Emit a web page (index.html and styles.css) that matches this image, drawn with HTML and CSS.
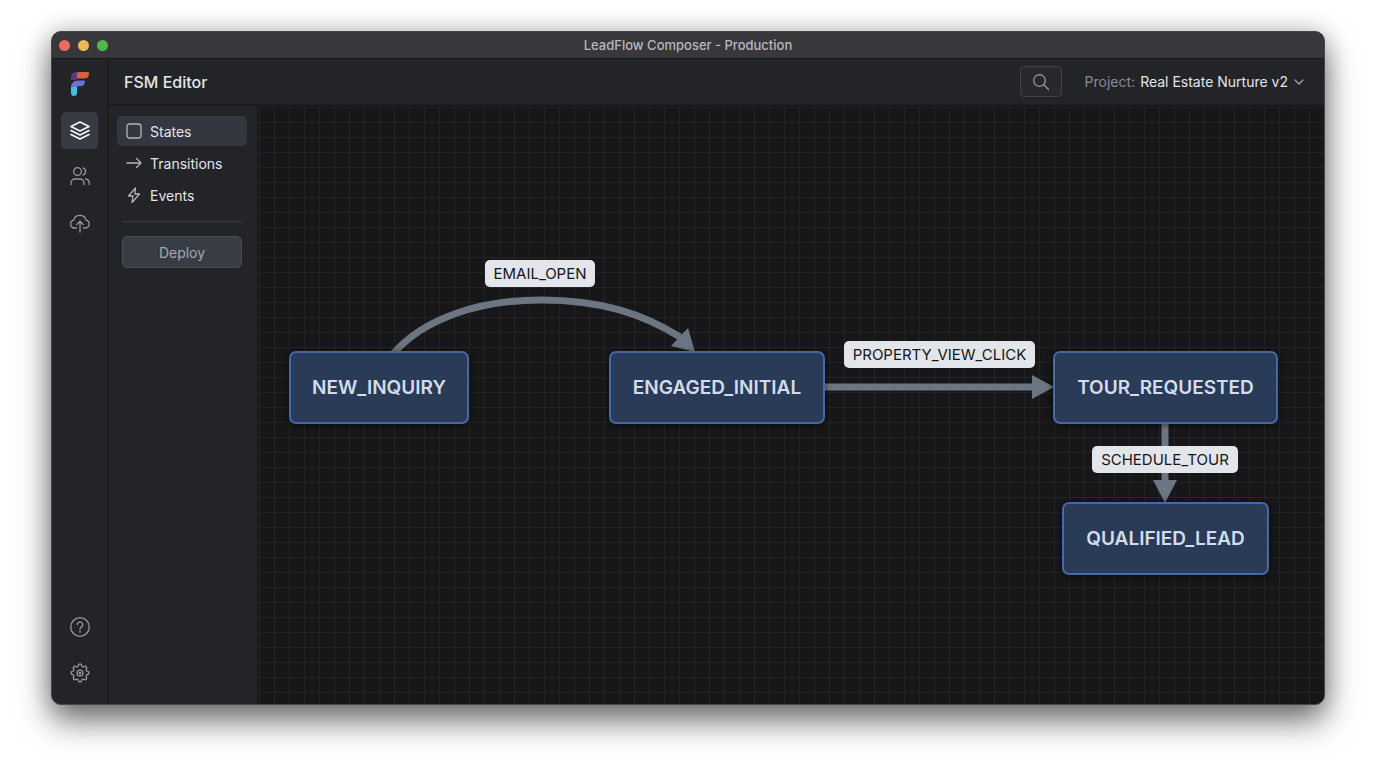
FILE: index.html
```html
<!DOCTYPE html>
<html lang="en">
<head>
  <meta charset="UTF-8">
  <meta name="viewport" content="width=device-width, initial-scale=1.0">
  <title>LeadFlow Composer - Production</title>
  <link rel="stylesheet" href="styles.css">
</head>
<body>
  <div class="window">
    <header class="titlebar">
      <div class="lights">
        <button class="light red" aria-label="Close"></button>
        <button class="light yellow" aria-label="Minimize"></button>
        <button class="light green" aria-label="Zoom"></button>
      </div>
      <div class="window-title">LeadFlow Composer - Production</div>
    </header>

    <div class="app">
      <nav class="rail" aria-label="Main">
        <svg class="logo" width="20" height="26" viewBox="0 0 20 26">
          <path d="M8 1H6a5 5 0 0 0-5 5v3h5l2-3z" fill="#5c3a78"/>
          <path d="M9 1h9a1 1 0 0 1 1 1v1a4.500 4.500 0 0 1-4.500 4.500H7V3a2 2 0 0 1 2-2z" fill="#d9603f"/>
          <path d="M1 16a6.500 6.500 0 0 1 6.500-6.500H14a1 1 0 0 1 1 1A4.800 4.800 0 0 1 10.200 15.300H7L1 17z" fill="#6a6fe0"/>
          <path d="M1 16.500l6-1.200V22a3 3 0 0 1-6 0z" fill="#3fc1e0"/>
        </svg>
        <button class="rail-btn active" aria-label="Layers">
          <svg width="22" height="22" viewBox="0 0 22 22">
            <path d="M11 2l9 4.500-9 4.500-9-4.500z"/>
            <path d="M2 10.500l9 4.500 9-4.500"/>
            <path d="M2 14.500l9 4.500 9-4.500"/>
          </svg>
        </button>
        <button class="rail-btn" aria-label="Contacts">
          <svg width="22" height="22" viewBox="0 0 22 22">
            <circle cx="8.500" cy="5.500" r="3.800"/>
            <path d="M2 18.500v-1.500a4 4 0 0 1 4-4h5a4 4 0 0 1 4 4v1.500"/>
            <path d="M14 1.900a3.800 3.800 0 0 1 0 7.200"/>
            <path d="M16.500 13a4 4 0 0 1 3.700 4v1.500"/>
          </svg>
        </button>
        <button class="rail-btn" aria-label="Upload">
          <svg width="22" height="22" viewBox="0 0 22 22">
            <path d="M7.500 16H5.500a4 4 0 0 1-.8-7.900 6.400 6.400 0 0 1 12.300 0A4 4 0 0 1 16.500 16h-2"/>
            <path d="M11 20V9.500M7.800 12.500L11 9.300l3.200 3.200"/>
          </svg>
        </button>
        <button class="rail-btn push" aria-label="Help">
          <svg width="22" height="22" viewBox="0 0 22 22">
            <circle cx="11" cy="11" r="9.300"/>
            <path d="M8.300 8.600a2.700 2.700 0 1 1 4.200 2.300c-1 .7-1.500 1.200-1.500 2.300"/>
            <path d="M11 15.200v1"/>
          </svg>
        </button>
        <button class="rail-btn" aria-label="Settings">
          <svg width="22" height="22" viewBox="0 0 22 22">
            <circle cx="11" cy="11" r="2.900"/>
            <circle cx="11" cy="11" r=".6"/>
            <path d="M9.300 3.700A1.700 1.700 0 0 1 12.700 3.700A1.400 1.400 0 0 0 14.970 4.640A1.700 1.700 0 0 1 17.360 7.030A1.400 1.400 0 0 0 18.300 9.300A1.700 1.700 0 0 1 18.300 12.700A1.400 1.400 0 0 0 17.360 14.970A1.700 1.700 0 0 1 14.970 17.360A1.400 1.400 0 0 0 12.700 18.300A1.700 1.700 0 0 1 9.300 18.300A1.400 1.400 0 0 0 7.030 17.360A1.700 1.700 0 0 1 4.640 14.970A1.400 1.400 0 0 0 3.700 12.700A1.700 1.700 0 0 1 3.700 9.300A1.400 1.400 0 0 0 4.640 7.030A1.700 1.700 0 0 1 7.030 4.640A1.400 1.400 0 0 0 9.300 3.700z"/>
          </svg>
        </button>
      </nav>

      <div class="main">
        <div class="toolbar">
          <h1>FSM Editor</h1>
          <button class="search" aria-label="Search">
            <svg width="18" height="18" viewBox="0 0 18 18">
              <circle cx="7.500" cy="7.500" r="5.800"/>
              <path d="M11.800 11.800L16.500 16.500"/>
            </svg>
          </button>
          <div class="project">
            <label for="project">Project:</label>
            <select id="project">
              <option>Real Estate Nurture v2</option>
            </select>
            <svg width="10" height="8" viewBox="0 0 10 8"><path d="M1 2l4 4 4-4"/></svg>
          </div>
        </div>

        <div class="workspace">
          <aside class="sidebar">
            <button class="side-item active">
              <svg width="16" height="16" viewBox="0 0 16 16"><rect x="1" y="1" width="14" height="14" rx="2.500"/></svg>
              States
            </button>
            <button class="side-item">
              <svg width="16" height="16" viewBox="0 0 16 16"><path d="M1 8h14M10.500 3.500L15 8l-4.500 4.500"/></svg>
              Transitions
            </button>
            <button class="side-item">
              <svg width="16" height="16" viewBox="0 0 16 16"><path d="M9.500 1L2.500 9h4.500l-1 6.500L13.500 7H9z"/></svg>
              Events
            </button>
            <hr>
            <button class="deploy">Deploy</button>
          </aside>

          <main class="canvas">
            <svg class="edges" width="100%" height="100%">
              <path class="line" d="M135 248C166 212 222 194 283 194S385 208 422 231"/>
              <path class="head" d="M437 246l-7-24-17 18z"/>
              <path class="line" d="M566 281H776"/>
              <path class="head" d="M796 281l-22-12v24z"/>
              <path class="line" d="M907 317V376"/>
              <path class="head" d="M907 397l-12-23h24z"/>
            </svg>
            <div class="node new-inquiry">NEW_INQUIRY</div>
            <div class="node engaged">ENGAGED_INITIAL</div>
            <div class="node tour">TOUR_REQUESTED</div>
            <div class="node qualified">QUALIFIED_LEAD</div>
            <div class="event email-open">EMAIL_OPEN</div>
            <div class="event view-click">PROPERTY_VIEW_CLICK</div>
            <div class="event schedule">SCHEDULE_TOUR</div>
          </main>
        </div>
      </div>
    </div>
  </div>
</body>
</html>
```
FILE: styles.css
```css
* {margin: 0; padding: 0; box-sizing: border-box;}
body {
  display: flex;
  min-height: 100vh;
  padding: 31px 51px 63px;
  background-color: #fff;
  font-family: Inter, "Liberation Sans", sans-serif;
  font-size: 15px;
  color: #e4e5ea;
}
button, select {
  font: inherit;
  color: inherit;
  border: none;
  background: none;
  cursor: pointer;
}
svg {
  flex: none;
  fill: none;
  stroke: currentColor;
  stroke-width: 1.3;
  stroke-linecap: round;
  stroke-linejoin: round;
}

/* window */
.window {
  flex: 1;
  display: flex;
  flex-direction: column;
  overflow: hidden;
  border: 1px solid #47474b;
  border-radius: 10px;
  background-color: #232428;
  box-shadow: 0 16px 32px rgba(0, 0, 0, 0.55), 0 0 24px rgba(0, 0, 0, 0.2);
}
.titlebar {
  display: grid;
  grid-template-columns: 1fr auto 1fr;
  align-items: center;
  height: 27px;
  padding: 0 7px;
  background-color: #38373b;
  border-bottom: 1px solid #18181b;
}
.lights {
  display: flex;
  gap: 8px;
}
.light {
  width: 11px;
  height: 11px;
  border-radius: 50%;
}
.red {background-color: #ec6a62;}
.yellow {background-color: #ebb854;}
.green {background-color: #4fb84c;}
.window-title {
  font-size: 13px;
  font-weight: 500;
  line-height: 16px;
  padding-bottom: 1px;
  color: #b9b9bc;
}
.app {
  flex: 1;
  display: flex;
}

/* icon rail */
.rail {
  display: flex;
  flex-direction: column;
  align-items: center;
  gap: 9px;
  width: 56px;
  padding: 12px 0 13px;
  border-right: 1px solid #17181b;
}
.logo {
  margin-bottom: 6px;
  stroke: none;
}
.rail-btn {
  display: flex;
  align-items: center;
  justify-content: center;
  width: 37px;
  height: 37px;
  border-radius: 5px;
  color: #97989d;
}
.rail-btn.active {
  background-color: #373b44;
  color: #f4f5f7;
}
.rail-btn.active svg {stroke-width: 1.6;}
.push {margin-top: auto;}

/* toolbar */
.main {
  flex: 1;
  display: flex;
  flex-direction: column;
}
.toolbar {
  display: flex;
  align-items: center;
  height: 47px;
  padding: 0 20px 0 16px;
  border-bottom: 2px solid #1a1b1e;
}
h1 {
  font-size: 16px;
  font-weight: 500;
}
.search {
  display: flex;
  align-items: center;
  justify-content: center;
  width: 42px;
  height: 31px;
  margin-left: auto;
  border: 1px solid #404146;
  border-radius: 4px;
  background-color: #28292d;
  color: #98999e;
}
.project {
  display: flex;
  align-items: center;
  gap: 5px;
  margin-left: 23px;
  font-size: 14px;
}
.project label {color: #8b8c92;}
.project svg {
  margin-left: 1px;
  color: #a4a5aa;
}
select {
  appearance: none;
  field-sizing: content;
}

/* sidebar */
.workspace {
  flex: 1;
  display: flex;
}
.sidebar {
  display: flex;
  flex-direction: column;
  width: 150px;
  padding: 10px 10px 10px 9px;
  border-right: 1px solid #17181b;
}
.side-item {
  display: flex;
  align-items: center;
  gap: 8px;
  height: 30px;
  margin-bottom: 2px;
  padding: 0 9px;
  border-radius: 5px;
  font-size: 14px;
}
.side-item svg {color: #b4b5ba;}
.side-item.active {background-color: #343740;}
hr {
  margin: 9px 5px 14px;
  border: none;
  border-top: 1px solid #3b3c41;
}
.deploy {
  height: 32px;
  margin: 0 5px;
  border: 1px solid #474c55;
  border-radius: 5px;
  background-color: #383c45;
  color: #a5a8b0;
  font-size: 14px;
}

/* canvas */
.canvas {
  flex: 1;
  position: relative;
  background-color: #17171a;
  background-image:
    linear-gradient(to right, #222327 1px, transparent 1px),
    linear-gradient(to bottom, #222327 1px, transparent 1px);
  background-size: 15px 15px;
  background-position: 1px 1px;
}
.edges {
  position: absolute;
  top: 0;
  left: 0;
}
.line {
  stroke: #6b7682;
  stroke-width: 7;
  stroke-linecap: butt;
}
.head {
  fill: #6b7682;
  stroke: none;
}
.node {
  position: absolute;
  display: flex;
  align-items: center;
  justify-content: center;
  height: 73px;
  border: 2px solid #4669a5;
  border-radius: 7px;
  background-color: #293b57;
  box-shadow: 0 1px 6px rgba(0, 0, 0, 0.6);
  color: #d3dcec;
  font-size: 19px;
  font-weight: 600;
}
.new-inquiry {left: 31px; top: 245px; width: 180px;}
.engaged {left: 351px; top: 245px; width: 216px;}
.tour {left: 795px; top: 245px; width: 225px;}
.qualified {left: 804px; top: 396px; width: 207px;}
.event {
  position: absolute;
  display: flex;
  align-items: center;
  justify-content: center;
  height: 27px;
  border-radius: 5px;
  background-color: #e2e5ea;
  color: #15161a;
  font-size: 15px;
}
.email-open {left: 227px; top: 154px; width: 110px;}
.view-click {left: 586px; top: 235px; width: 191px;}
.schedule {left: 834px; top: 340px; width: 146px;}
```
